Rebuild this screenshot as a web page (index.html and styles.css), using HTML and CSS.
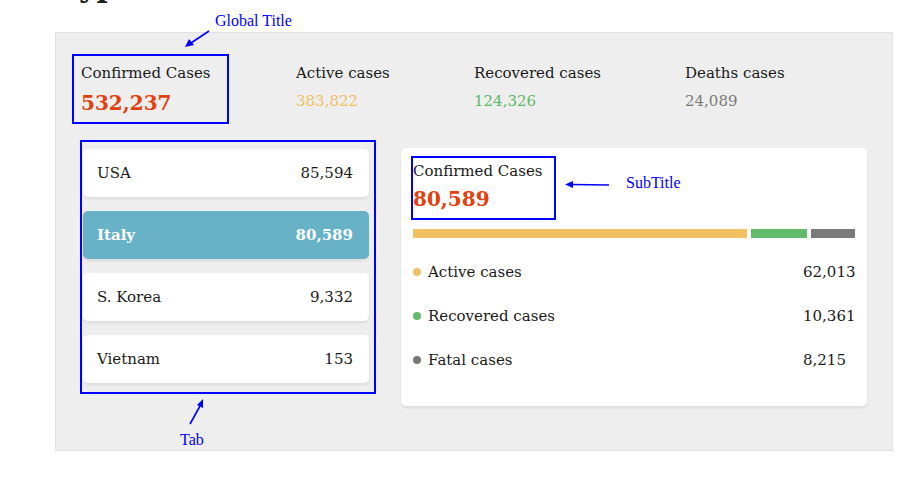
FILE: index.html
```html
<!DOCTYPE html>
<html>
<head>
<meta charset="utf-8">
<link rel="stylesheet" href="styles.css">
</head>
<body>
<div class="page">
  <h2 class="page-title">Types</h2>
  <div class="panel">
    <div class="stats">
      <div class="stat"><div class="stat-label">Confirmed Cases</div><div class="stat-value confirmed">532,237</div></div>
      <div class="stat"><div class="stat-label">Active cases</div><div class="stat-value active">383,822</div></div>
      <div class="stat"><div class="stat-label">Recovered cases</div><div class="stat-value recovered">124,326</div></div>
      <div class="stat"><div class="stat-label">Deaths cases</div><div class="stat-value deaths">24,089</div></div>
    </div>
    <div class="main">
      <div class="tabs">
        <div class="tab"><span>USA</span><span>85,594</span></div>
        <div class="tab selected"><span>Italy</span><span>80,589</span></div>
        <div class="tab"><span>S. Korea</span><span>9,332</span></div>
        <div class="tab"><span>Vietnam</span><span>153</span></div>
      </div>
      <div class="detail">
        <div class="sub-label">Confirmed Cases</div>
        <div class="sub-value">80,589</div>
        <div class="bar">
          <div class="seg seg-active" style="flex-grow:62013"></div>
          <div class="seg seg-recovered" style="flex-grow:10361"></div>
          <div class="seg seg-fatal" style="flex-grow:8215"></div>
        </div>
        <div class="legend">
          <span class="dot dot-active"></span><span class="legend-label">Active cases</span><span class="legend-value">62,013</span>
          <span class="dot dot-recovered"></span><span class="legend-label">Recovered cases</span><span class="legend-value">10,361</span>
          <span class="dot dot-fatal"></span><span class="legend-label">Fatal cases</span><span class="legend-value">8,215</span>
        </div>
      </div>
    </div>
  </div>

  <div class="note note-global">Global Title</div>
  <div class="note note-sub">SubTitle</div>
  <div class="note note-tab">Tab</div>
  <div class="frame frame-global"></div>
  <div class="frame frame-sub"></div>
  <div class="frame frame-tab"></div>
  <svg class="arrows" width="921" height="496" viewBox="0 0 921 496">
    <g stroke="#0000ff" stroke-width="1.6" fill="#0000ff">
      <line x1="209" y1="31" x2="191" y2="43"/>
      <polygon points="185,47 189,39 194,45" stroke="none"/>
      <line x1="609" y1="185" x2="572" y2="184.5"/>
      <polygon points="565,184.5 573,181 573,188" stroke="none"/>
      <line x1="190" y1="424" x2="200" y2="406"/>
      <polygon points="203,399 203,408 197,405" stroke="none"/>
    </g>
  </svg>
</div>
</body>
</html>
```
FILE: styles.css
```css
html, body {
  margin: 0;
  padding: 0;
  background: #ffffff;
}
body {
  font-family: "DejaVu Serif", "Liberation Serif", serif;
  color: #1a1a1a;
}
.page {
  position: relative;
  width: 921px;
  height: 496px;
  overflow: hidden;
}
.page-title {
  margin: -30px 0 0 60px;
  height: 62px;
  font-size: 30px;
  font-weight: bold;
  line-height: 34px;
  color: #1a1a1a;
}
.panel {
  margin-left: 55px;
  width: 836px;
  height: 417px;
  background: #eeeeee;
  border: 1px solid #e2e2e2;
  box-sizing: content-box;
}
.stats {
  display: grid;
  grid-template-columns: 215px 178px 211px auto;
  padding: 30px 0 0 25px;
  height: 74px;
}
.stat-label {
  font-size: 15px;
  line-height: 20px;
}
.stat-value {
  font-size: 15px;
  line-height: 20px;
  margin-top: 8px;
}
.stat-value.confirmed {
  color: #e2400c;
  font-weight: bold;
  font-size: 20px;
  line-height: 24px;
  margin-top: 8px;
}
.active { color: #f1c063; }
.recovered { color: #5fb968; }
.deaths { color: #7a7a7a; }

.main {
  display: flex;
  align-items: flex-start;
  gap: 32px;
  padding: 11px 0 0 27px;
}
.tabs {
  width: 286px;
  display: flex;
  flex-direction: column;
  gap: 14px;
  padding-top: 1px;
}
.tab {
  height: 48px;
  display: flex;
  align-items: center;
  justify-content: space-between;
  padding: 0 16px 0 14px;
  background: #ffffff;
  border-radius: 5px;
  box-shadow: 0 2px 3px rgba(0,0,0,0.08);
  font-size: 15px;
  color: #1a1a1a;
}
.tab.selected {
  background: #67b2c6;
  color: #ffffff;
  font-weight: bold;
}
.detail {
  width: 442px;
  height: 234px;
  padding: 12px;
  background: #ffffff;
  border-radius: 5px;
  box-shadow: 0 2px 3px rgba(0,0,0,0.08);
}
.sub-label {
  font-size: 15px;
  line-height: 20px;
  margin-top: 1px;
}
.sub-value {
  font-size: 20px;
  font-weight: bold;
  color: #e2400c;
  line-height: 24px;
  margin-top: 6px;
}
.bar {
  display: flex;
  gap: 4px;
  height: 9px;
  margin-top: 18px;
}
.seg { flex-basis: 0; }
.seg-active { background: #f2c163; }
.seg-recovered { background: #62bb6a; }
.seg-fatal { background: #7a7a7a; }

.legend {
  display: grid;
  grid-template-columns: 8px 1fr 52px;
  column-gap: 7px;
  row-gap: 24px;
  align-items: center;
  margin-top: 24px;
  font-size: 15px;
  line-height: 20px;
}
.dot {
  width: 8px;
  height: 8px;
  border-radius: 50%;
}
.dot-active { background: #f2c163; }
.dot-recovered { background: #62bb6a; }
.dot-fatal { background: #777777; }
.legend-value { white-space: nowrap; }

.note {
  position: absolute;
  font-family: "Liberation Serif", serif;
  font-size: 16px;
  color: #0000ff;
  line-height: 18px;
}
.note-global { left: 215px; top: 12px; }
.note-sub { left: 626px; top: 174px; }
.note-tab { left: 180px; top: 431px; }
.frame {
  position: absolute;
  border: 2px solid #0000ff;
  box-sizing: border-box;
}
.frame-global { left: 72px; top: 54px; width: 157px; height: 70px; }
.frame-sub { left: 411px; top: 156px; width: 145px; height: 64px; }
.frame-tab { left: 80px; top: 140px; width: 296px; height: 254px; }
.arrows {
  position: absolute;
  left: 0;
  top: 0;
}
```
